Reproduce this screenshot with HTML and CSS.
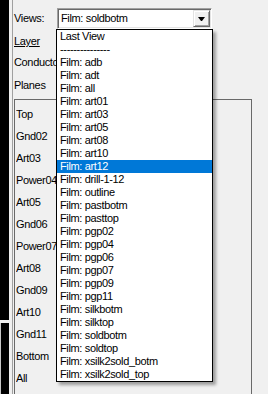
FILE: index.html
```html
<!DOCTYPE html>
<html lang="en">
<head>
  <meta charset="UTF-8" />
  <title>Views</title>
  <link rel="stylesheet" href="styles.css">
</head>
<body>
  <div class="screen">
    <div class="side">
      <div class="side-top"></div>
      <div class="side-bottom"></div>
    </div>
    <div class="rule"></div>

    <div class="panel">
      <div class="views-row">
        <span class="label views-label">Views:</span>
        <div class="combo">
          <span class="combo-value">Film: soldbotm</span>
          <span class="combo-btn"><span class="arrow"></span></span>

          <ul class="dropdown">
            <li>Last View</li>
            <li>---------------</li>
            <li>Film: adb</li>
            <li>Film: adt</li>
            <li>Film: all</li>
            <li>Film: art01</li>
            <li>Film: art03</li>
            <li>Film: art05</li>
            <li>Film: art08</li>
            <li>Film: art10</li>
            <li class="selected">Film: art12</li>
            <li>Film: drill-1-12</li>
            <li>Film: outline</li>
            <li>Film: pastbotm</li>
            <li>Film: pasttop</li>
            <li>Film: pgp02</li>
            <li>Film: pgp04</li>
            <li>Film: pgp06</li>
            <li>Film: pgp07</li>
            <li>Film: pgp09</li>
            <li>Film: pgp11</li>
            <li>Film: silkbotm</li>
            <li>Film: silktop</li>
            <li>Film: soldbotm</li>
            <li>Film: soldtop</li>
            <li>Film: xsilk2sold_botm</li>
            <li>Film: xsilk2sold_top</li>
          </ul>
        </div>
      </div>

      <div class="label layer-link">Layer</div>
      <div class="label conductors">Conductors</div>
      <div class="label planes">Planes</div>

      <div class="layers">
        <div class="layer-row">Top</div>
        <div class="layer-row">Gnd02</div>
        <div class="layer-row">Art03</div>
        <div class="layer-row">Power04</div>
        <div class="layer-row">Art05</div>
        <div class="layer-row">Gnd06</div>
        <div class="layer-row">Power07</div>
        <div class="layer-row">Art08</div>
        <div class="layer-row">Gnd09</div>
        <div class="layer-row">Art10</div>
        <div class="layer-row">Gnd11</div>
        <div class="layer-row">Bottom</div>
        <div class="layer-row">All</div>
      </div>
    </div>
  </div>
</body>
</html>
```

FILE: styles.css
```css
html, body {
  margin: 0;
  padding: 0;
  background: #f0f0f0;
  font-family: 'Liberation Sans', Arial, sans-serif;
  font-size: 11px;
  letter-spacing: -0.35px;
  color: #000;
}

.screen {
  display: flex;
  height: 394px;
  overflow: hidden;
}

.side {
  width: 9px;
  display: flex;
  flex-direction: column;
}

.side-top {
  height: 320px;
  background: #000;
}

.side-bottom {
  flex: 1;
  margin-top: 3px;
  border-left: 1px solid #c8c8c8;
  background: #000;
}

.rule {
  width: 1px;
  margin-left: 3px;
  background: #a0a0a0;
}

.panel {
  flex: 1;
  padding: 8px 0 0 1px;
}

.label {
  line-height: 13px;
  white-space: nowrap;
}

/* labels end where the open list starts */
.conductors {
  width: 42px;
  overflow: hidden;
}

.views-row {
  display: flex;
  align-items: center;
  height: 21px;
}

.views-label {
  width: 43px;
}

.combo {
  position: relative;
  display: flex;
  align-items: center;
  box-sizing: border-box;
  width: 155px;
  height: 21px;
  padding: 1px 1px 1px 2px;
  background: #fff;
  border: 1px solid;
  border-color: #a0a0a0 #fff #fff #a0a0a0;
  box-shadow: inset 1px 1px 0 #696969, inset -1px -1px 0 #e3e3e3;
}

.combo-value {
  flex: 1;
  line-height: 13px;
  padding-left: 1px;
}

.combo-btn {
  display: flex;
  align-items: center;
  justify-content: center;
  box-sizing: border-box;
  width: 17px;
  height: 17px;
  background: #f0f0f0;
  border: 1px solid;
  border-color: #e3e3e3 #696969 #696969 #e3e3e3;
  box-shadow: inset 1px 1px 0 #fff, inset -1px -1px 0 #a0a0a0;
}

.arrow {
  width: 1px;
  height: 0;
  border-left: 3px solid transparent;
  border-right: 3px solid transparent;
  border-top: 4px solid #000;
  margin-top: 1px;
}

.dropdown {
  position: absolute;
  top: 20px;
  left: -2px;
  z-index: 2;
  width: 155px;
  margin: 0;
  padding: 0;
  list-style: none;
  background: #fff;
  border: 1px solid #000;
  box-shadow: 3px 3px 3px rgba(0,0,0,0.35);
}

.dropdown li {
  height: 13px;
  line-height: 13px;
  padding-left: 3px;
  white-space: nowrap;
}

.dropdown li.selected {
  background: #0078d7;
  color: #fff;
}

.layer-link {
  margin-top: 6px;
  text-decoration: underline;
}

.conductors {
  margin-top: 8px;
}

.planes {
  margin-top: 10px;
}

.layers {
  box-sizing: border-box;
  width: 238px;
  height: 300px;
  margin-top: 7px;
  padding: 8px 0 0 1px;
  border: 1px solid #696969;
}

.layer-row {
  width: 41px;
  height: 22px;
  line-height: 13px;
  white-space: nowrap;
  overflow: hidden;
}
```
